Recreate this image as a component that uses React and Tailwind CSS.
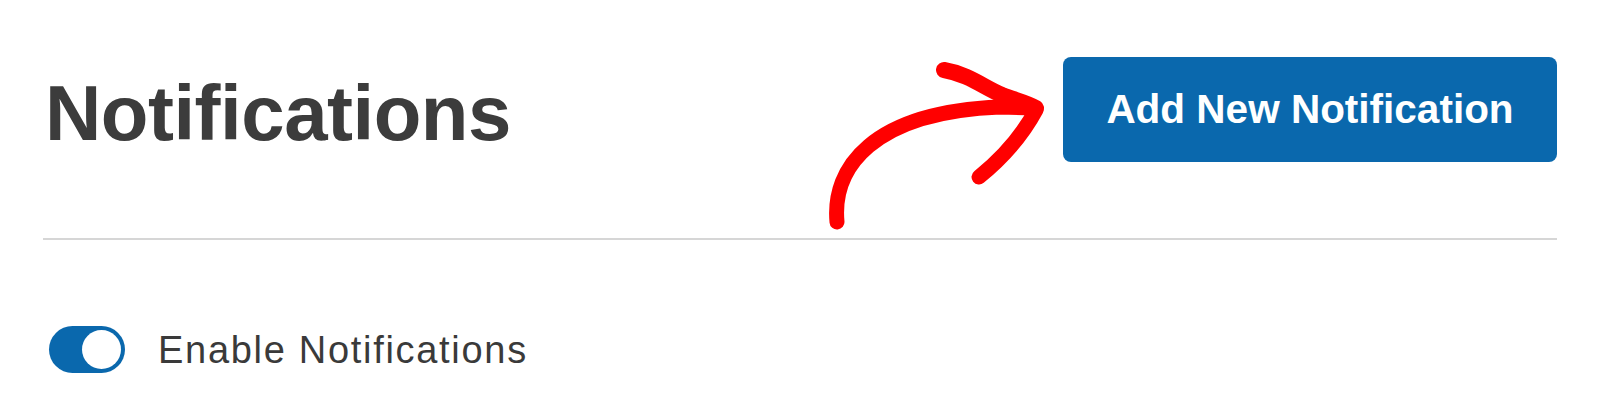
export default function App() {
  return (
    <div className="relative h-[411px] w-[1600px] overflow-hidden bg-white px-[43px] font-['Liberation_Sans',Arial,sans-serif]">
      <div className="flex items-start justify-between pt-[57px]">
        <h1 className="ml-[2px] mt-[17px] text-[78px] font-bold leading-[78px] tracking-[-0.5px] text-[#3c3c3c]">
          Notifications
        </h1>
        <button className="flex h-[105px] w-[494px] items-center justify-center rounded-[8px] bg-[#0a68ad] text-[40.5px] font-bold text-white">
          Add New Notification
        </button>
      </div>

      <div className="mt-[76px] h-[2px] w-full bg-[#d6d6d6]" />

      <div className="ml-[6px] mt-[86px] flex items-center gap-[33px]">
        <div className="flex h-[47px] w-[76px] items-center justify-end rounded-full bg-[#0a68ad] px-[4px]">
          <div className="h-[39px] w-[39px] rounded-full bg-white" />
        </div>
        <span className="text-[38px] leading-none tracking-[1.7px] text-[#3a3a3a]">
          Enable Notifications
        </span>
      </div>

      {/* hand-drawn annotation arrow */}
      <svg
        className="pointer-events-none absolute left-0 top-0"
        width="1600"
        height="411"
        viewBox="0 0 1600 411"
        fill="none"
      >
        <path
          d="M837 222 C832 168 872 112 1000 107 L1034 108"
          stroke="#ff0000"
          strokeWidth="15"
          strokeLinecap="round"
          strokeLinejoin="round"
        />
        <path
          d="M944 70 C968 74 985 88 1002 95 C1015 100 1028 103 1036 108"
          stroke="#ff0000"
          strokeWidth="16"
          strokeLinecap="round"
          strokeLinejoin="round"
        />
        <path
          d="M1036 110 C1022 136 1000 160 979 177"
          stroke="#ff0000"
          strokeWidth="15"
          strokeLinecap="round"
          strokeLinejoin="round"
        />
      </svg>
    </div>
  );
}
